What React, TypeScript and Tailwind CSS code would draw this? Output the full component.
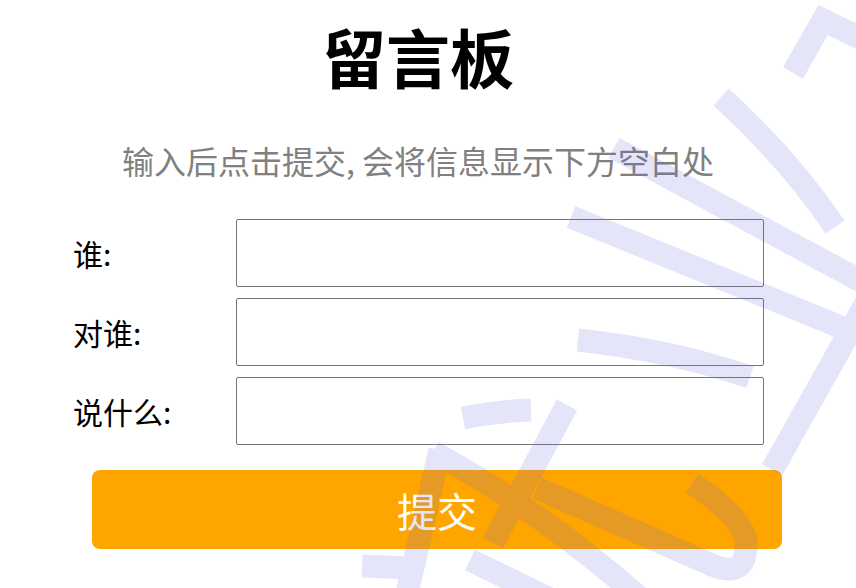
import { useState } from 'react';

const font = { fontFamily: '"Noto Sans CJK SC", "Microsoft YaHei", sans-serif' };

function Watermark() {
  return (
    <svg
      className="pointer-events-none absolute left-0 top-0 z-10"
      width="856"
      height="588"
      viewBox="0 0 856 588"
    >
      <g opacity="0.16" fill="none" stroke="#6464e6" strokeWidth="23">
        <path d="M793,73 L823,20 L872,44" />
        <path d="M721,97 Q790,160 835,227" />
        <path d="M614,148 L872,287" />
        <path d="M571,217 L848,330" />
        <path d="M876,285 L772,470" />
        <path d="M578,340 Q670,350 750,377" />
        <path d="M463,418 Q500,411 531,410" />
        <path d="M567,405 L493,543" />
        <path d="M433,452 Q540,510 640,598" />
        <path d="M537,488 L712,565 Q748,580 746,540 Q740,515 692,483" />
        <path d="M440,450 L406,598" />
        <path d="M470,560 L548,598" />
        <path d="M362,566 L412,568" />
      </g>
    </svg>
  );
}

export default function App() {
  const [who, setWho] = useState('');
  const [to, setTo] = useState('');
  const [msg, setMsg] = useState('');

  const rows = [
    { label: '谁:', value: who, set: setWho },
    { label: '对谁:', value: to, set: setTo },
    { label: '说什么:', value: msg, set: setMsg },
  ];

  return (
    <div className="relative h-[588px] w-[856px] overflow-hidden bg-white" style={font}>
      <div className="w-[836px] pt-[23px] text-center">
        <h1 className="text-[64px] font-bold leading-none text-black">留言板</h1>
        <p className="mt-[57px] text-[32px] leading-[32px] text-[#808080]">
          输入后点击提交, 会将信息显示下方空白处
        </p>
      </div>

      <div className="mt-[43px] flex flex-col gap-[11px] pl-[73px]">
        {rows.map((r) => (
          <div key={r.label} className="flex items-center">
            <label className="w-[163px] text-[30px] leading-none text-black">{r.label}</label>
            <input
              type="text"
              value={r.value}
              onChange={(e) => r.set(e.target.value)}
              className="h-[68px] w-[528px] rounded-[2px] border border-[#767676] bg-white px-2 text-[24px] outline-none"
            />
          </div>
        ))}
      </div>

      <button className="ml-[92px] mt-[25px] flex h-[79px] w-[690px] items-center justify-center rounded-[8px] bg-[#ffa500] text-[40px] leading-none text-white">
        提交
      </button>

      <Watermark />
    </div>
  );
}
